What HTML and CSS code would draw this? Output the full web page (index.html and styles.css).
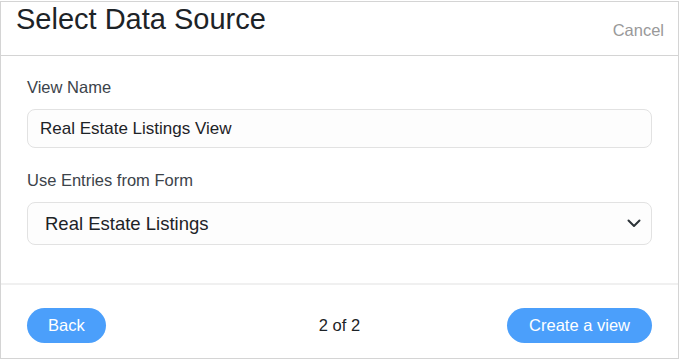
FILE: index.html
```html
<!DOCTYPE html>
<html>

<head>
    <title>Select Data Source</title>
    <link rel="stylesheet" href="styles.css">
</head>

<body>
    <div class="modal">
        <div class="modal-header">
            <h2 class="modal-title">Select Data Source</h2>
            <a class="cancel" href="#">Cancel</a>
        </div>

        <div class="modal-body">
            <div class="field">
                <label for="viewName">View Name</label>
                <input type="text" id="viewName" class="text-input" value="Real Estate Listings View">
            </div>

            <div class="field">
                <label for="formSelect">Use Entries from Form</label>
                <div class="select-box" id="formSelect">
                    <span>Real Estate Listings</span>
                    <svg class="chevron" width="14" height="9" viewBox="0 0 14 9">
                        <path d="M1.5 1.5 L7 7 L12.5 1.5" fill="none" stroke="#2c3338" stroke-width="2"
                            stroke-linecap="round" stroke-linejoin="round" />
                    </svg>
                </div>
            </div>
        </div>

        <div class="modal-footer">
            <div class="footer-left">
                <button class="btn">Back</button>
            </div>
            <span class="step">2 of 2</span>
            <div class="footer-right">
                <button class="btn btn-wide">Create a view</button>
            </div>
        </div>
    </div>
</body>

</html>
```

FILE: styles.css
```css
body {
    margin: 0;
    font-family: "Liberation Sans", Arial, sans-serif;
    background-color: #fff;
}

.modal {
    width: 677px;
    height: 356px;
    margin-top: 1px;
    border: 1px solid #d4d4d4;
    display: flex;
    flex-direction: column;
}

.modal-header {
    height: 53px;
    border-bottom: 1px solid #d4d4d4;
    display: flex;
    justify-content: space-between;
    padding: 0 14px 0 15px;
}

.modal-title {
    margin: 0;
    font-size: 29px;
    font-weight: normal;
    line-height: 34px;
    color: #1d2327;
}

.cancel {
    font-size: 16.5px;
    color: #999;
    text-decoration: none;
    margin-top: 19px;
}

.modal-body {
    padding: 22px 26px 0 26px;
    height: 205px;
    border-bottom: 2px solid #f0f0f0;
}

.field {
    margin-bottom: 23px;
}

.field label {
    display: block;
    font-size: 16.5px;
    color: #3c434a;
    margin-bottom: 12px;
}

.text-input {
    box-sizing: border-box;
    width: 625px;
    height: 39px;
    padding: 0 12px;
    border: 1px solid #e2e2e2;
    border-radius: 8px;
    background-color: #fdfdfd;
    font-family: "Liberation Sans", Arial, sans-serif;
    font-size: 17px;
    color: #1d2327;
}

.select-box {
    box-sizing: border-box;
    width: 625px;
    height: 43px;
    padding: 0 10px 0 17px;
    border: 1px solid #e2e2e2;
    border-radius: 8px;
    background-color: #fdfdfd;
    display: flex;
    align-items: center;
    justify-content: space-between;
    font-size: 18.5px;
    color: #1d2327;
}

.modal-footer {
    flex: 1;
    display: grid;
    grid-template-columns: 1fr auto 1fr;
    align-items: center;
    padding: 8px 26px 0 26px;
}

.footer-right {
    text-align: right;
}

.step {
    font-size: 16.5px;
    color: #1d2327;
}

.btn {
    height: 35px;
    padding: 0 21px;
    border: none;
    border-radius: 18px;
    background-color: #4b9ffb;
    color: #fff;
    font-family: "Liberation Sans", Arial, sans-serif;
    font-size: 16.5px;
    cursor: pointer;
}

.btn-wide {
    padding: 0 22px;
}
```
